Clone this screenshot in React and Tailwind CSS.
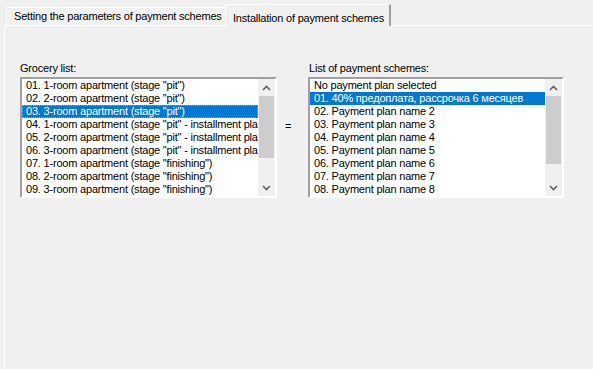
import { useState } from 'react';

const products = [
  '01. 1-room apartment (stage "pit")',
  '02. 2-room apartment (stage "pit")',
  '03. 3-room apartment (stage "pit")',
  '04. 1-room apartment (stage "pit" - installment plan)',
  '05. 2-room apartment (stage "pit" - installment plan)',
  '06. 3-room apartment (stage "pit" - installment plan)',
  '07. 1-room apartment (stage "finishing")',
  '08. 2-room apartment (stage "finishing")',
  '09. 3-room apartment (stage "finishing")',
];

const schemes = [
  'No payment plan selected',
  '01. 40% предоплата, рассрочка 6 месяцев',
  '02. Payment plan name 2',
  '03. Payment plan name 3',
  '04. Payment plan name 4',
  '05. Payment plan name 5',
  '06. Payment plan name 6',
  '07. Payment plan name 7',
  '08. Payment plan name 8',
];

function Chevron({ up }) {
  return (
    <svg width="9" height="6" viewBox="0 0 9 6" className="block">
      <path d={up ? 'M1 5 L4.5 1.5 L8 5' : 'M1 1 L4.5 4.5 L8 1'} fill="none" stroke="#606060" strokeWidth="1.6" />
    </svg>
  );
}

function ListBox({ items, selected, focused, thumbHeight, width }) {
  return (
    <div className={`flex h-[121px] border-2 border-t-[#a0a0a0] border-l-[#a0a0a0] border-b-white border-r-white bg-white ${width}`}>
      <div className="min-w-0 flex-1">
        {items.map((t, i) => (
          <div
            key={i}
            className={`h-[13px] overflow-hidden whitespace-nowrap pl-[4px] leading-[13px] ${i === selected ? 'bg-[#0078d7] text-white' : 'text-black'} ${i === selected && focused ? 'outline outline-1 -outline-offset-1 outline-dotted outline-[#ff8728]' : ''}`}
          >
            {t}
          </div>
        ))}
      </div>
      <div className="flex w-[17px] flex-col bg-[#f0f0f0]">
        <div className="flex h-[17px] items-center justify-center"><Chevron up /></div>
        <div className="flex-1 px-[1px]">
          <div className="bg-[#cdcdcd]" style={{ height: thumbHeight }} />
        </div>
        <div className="flex h-[17px] items-center justify-center"><Chevron /></div>
      </div>
    </div>
  );
}

export default function App() {
  const [tab] = useState(1);
  return (
    <div className="h-[369px] w-[593px] overflow-hidden bg-[#f0f0f0] text-[11px] tracking-[-0.2px] text-black" style={{ fontFamily: '"Liberation Sans", Arial, sans-serif' }}>
      <div className="flex h-[25px] items-end pl-[6px]">
        <div className={`flex h-[18px] w-[219px] items-center whitespace-nowrap border-l border-t border-white pl-[7px] ${tab === 0 ? 'bg-white' : ''}`}>
          Setting the parameters of payment schemes
        </div>
        <div className="relative z-10 -mb-px flex h-[22px] w-[166px] items-start whitespace-nowrap border-l border-t border-r-2 border-white border-r-[#a0a0a0] bg-[#f0f0f0] pl-[7px] pt-[5px]">
          Installation of payment schemes
        </div>
      </div>
      <div className="ml-[4px] h-[344px] border-l border-t border-white pl-[15px] pt-[36px]">
        <div className="flex items-start">
          <div>
            <div className="mb-[2px] h-[13px] leading-[13px]">Grocery list:</div>
            <ListBox items={products} selected={2} focused thumbHeight={62} width="w-[257px]" />
          </div>
          <div className="w-[31px] pt-[56px] pl-[8px]">=</div>
          <div>
            <div className="mb-[2px] h-[13px] pl-[1px] leading-[13px]">List of payment schemes:</div>
            <ListBox items={schemes} selected={1} thumbHeight={68} width="w-[256px]" />
          </div>
        </div>
      </div>
    </div>
  );
}
